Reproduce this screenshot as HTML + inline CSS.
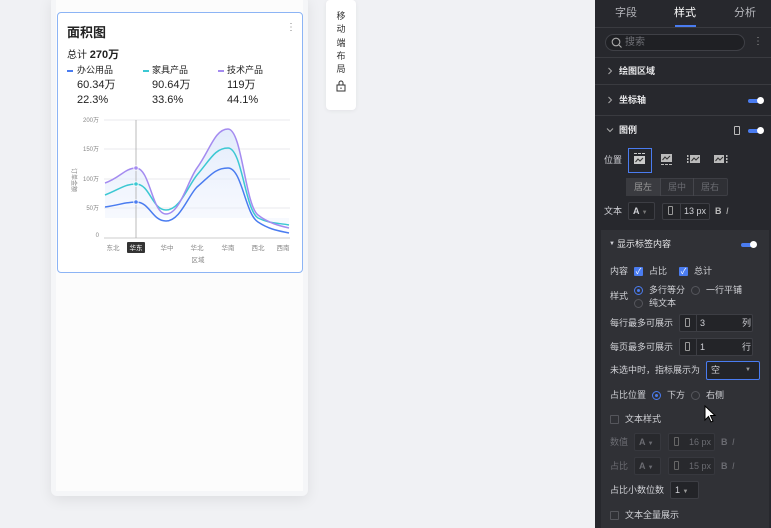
<!DOCTYPE html>
<html><head><meta charset="utf-8">
<style>
*{box-sizing:border-box;margin:0;padding:0}
body{width:771px;height:528px;overflow:hidden;background:#f0f1f4;font-family:"Liberation Sans","Noto Sans CJK SC",sans-serif;position:relative}
.a{position:absolute}
.phone{left:51px;top:-4px;width:257px;height:500px;background:#f5f6f8;border-radius:6px;box-shadow:0 4px 14px rgba(0,0,0,.08)}
.inner{left:56px;top:0;width:247px;height:491px;background:#fcfcfc}
.card{left:57px;top:12px;width:246px;height:261px;border:1px solid #8cb4f5;border-radius:4px;background:#fff}
.t{font-size:12px;color:#222}
.side{left:326px;top:0;width:30px;height:110px;background:#fff;border-radius:4px;box-shadow:0 1px 4px rgba(0,0,0,.06);font-size:9px;color:#333;text-align:center;line-height:13.3px;padding-top:10px}
.panel{left:595px;top:0;width:176px;height:528px;background:#27282d;color:#d0d1d6;font-size:9px}
.panel .a{font-size:9px;line-height:11px}
.sep{left:0;width:176px;height:1px;background:#3a3b40}
.tog{width:14px;height:4px;background:#4a7cf0;border-radius:2px}
.tog:after{content:"";position:absolute;right:-2px;top:-2px;width:7px;height:7px;border-radius:50%;background:#fff}
.box{border:1px solid #3d3e44;background:#232428;border-radius:2px}
.cb{width:9px;height:9px;background:#4a7cf0;border-radius:1px;color:#fff;font-size:8px!important;line-height:9px!important;text-align:center}
.cbe{width:9px;height:9px;border:1px solid #55565c;border-radius:1px}
.rd{width:9px;height:9px;border-radius:50%;border:1px solid #55565c}
.rdo{width:9px;height:9px;border-radius:50%;border:1px solid #4a7cf0}
.rdo:after{content:"";position:absolute;left:2px;top:2px;width:3px;height:3px;border-radius:50%;background:#4a7cf0}
.dim{color:#6b6c72}
</style></head><body>
<div class="a phone"></div>
<div class="a inner"></div>
<div class="a card"></div>
<div class="a" style="left:67px;top:22px;font-size:13px;font-weight:bold;color:#222">面积图</div>
<div class="a" style="left:286px;top:22px;font-size:10px;color:#888">⋮</div>
<div class="a t" style="left:67px;top:46px;font-size:10px">总计 <b style="font-size:11px">270万</b></div>
<div class="a" style="left:67px;top:70px;width:6px;height:2px;background:#4a7cf0"></div>
<div class="a" style="left:143px;top:70px;width:6px;height:2px;background:#3cc8d3"></div>
<div class="a" style="left:218px;top:70px;width:6px;height:2px;background:#a48bf0"></div>
<div class="a t" style="left:77px;top:65px;font-size:9px;line-height:11px">办公用品</div>
<div class="a t" style="left:152px;top:65px;font-size:9px;line-height:11px">家具产品</div>
<div class="a t" style="left:227px;top:65px;font-size:9px;line-height:11px">技术产品</div>
<div class="a t" style="left:77px;top:78px;font-size:11px;line-height:15px">60.34万<br>22.3%</div>
<div class="a t" style="left:152px;top:78px;font-size:11px;line-height:15px">90.64万<br>33.6%</div>
<div class="a t" style="left:227px;top:78px;font-size:11px;line-height:15px">119万<br>44.1%</div>
<svg class="a" style="left:57px;top:110px" width="246" height="160" viewBox="57 110 246 160">
<defs><linearGradient id="g" x1="0" y1="0" x2="0" y2="1"><stop offset="0" stop-color="#dbe6fb" stop-opacity=".8"/><stop offset="1" stop-color="#eef3fd" stop-opacity=".4"/></linearGradient></defs>
<g stroke="#e8e9ec" stroke-width="1"><line x1="104" y1="120" x2="290" y2="120"/><line x1="104" y1="149" x2="290" y2="149"/><line x1="104" y1="179" x2="290" y2="179"/><line x1="104" y1="208" x2="290" y2="208"/><line x1="104" y1="238" x2="290" y2="238" stroke="#ccc"/></g>
<g font-size="6" fill="#888" text-anchor="end"><text x="99" y="122">200万</text><text x="99" y="151">150万</text><text x="99" y="181">100万</text><text x="99" y="210">50万</text><text x="99" y="237">0</text></g>
<text x="72" y="180" font-size="6" fill="#888" transform="rotate(90 72 180)" text-anchor="middle">订单金额</text>
<path d="M105,183 C120,178 125,166 136,168 C150,170 152,214 166,214 C180,214 188,180 197,168 C210,150 215,129 228,129 C242,129 245,205 258,215 C268,223 280,226 289,228 L289,218 L105,218Z" fill="url(#g)"/>
<line x1="136" y1="120" x2="136" y2="238" stroke="#aaa" stroke-width=".8"/>
<path d="M105,207 C120,205 125,202 136,202 C150,202 152,221 166,221 C180,221 188,196 197,187 C210,176 215,168 228,168 C242,168 245,214 258,222 C270,230 280,231 289,233" fill="none" stroke="#4a7cf0" stroke-width="1.5"/>
<path d="M105,195 C120,189 125,184 136,184 C150,184 152,210 166,210 C180,210 188,186 197,175 C210,160 215,148 228,148 C242,148 245,210 258,218 C270,224 280,223 289,225" fill="none" stroke="#3cc8d3" stroke-width="1.5"/>
<path d="M105,183 C120,178 125,168 136,168 C150,168 152,214 166,214 C180,214 188,180 197,168 C210,150 215,129 228,129 C242,129 245,205 258,215 C268,223 280,226 289,228" fill="none" stroke="#a48bf0" stroke-width="1.5"/>
<circle cx="136" cy="202" r="2.2" fill="#4a7cf0" stroke="#fff" stroke-width=".8"/><circle cx="136" cy="184" r="2.2" fill="#3cc8d3" stroke="#fff" stroke-width=".8"/><circle cx="136" cy="168" r="2.2" fill="#a48bf0" stroke="#fff" stroke-width=".8"/>
<rect x="127" y="242" width="18" height="11" rx="1" fill="#333"/>
<g font-size="6.5" fill="#888" text-anchor="middle"><text x="113" y="250">东北</text><text x="136" y="250" fill="#fff">华东</text><text x="167" y="250">华中</text><text x="197" y="250">华北</text><text x="228" y="250">华南</text><text x="258" y="250">西北</text><text x="283" y="250">西南</text><text x="198" y="262">区域</text></g>
</svg>
<div class="a side">移<br>动<br>端<br>布<br>局<br><svg width="10" height="12" viewBox="0 0 10 12" style="margin-top:4px"><rect x="1" y="5" width="8" height="6" fill="none" stroke="#333"/><path d="M3 5V3a2 2 0 0 1 4 0v2" fill="none" stroke="#333"/><line x1="5" y1="7.5" x2="5" y2="9" stroke="#333"/></svg></div>

<div class="a panel">
<div class="a" style="left:20px;top:7px;font-size:11px;line-height:13px;color:#b5b6bb">字段</div>
<div class="a" style="left:79px;top:7px;font-size:11px;line-height:13px;color:#fff">样式</div>
<div class="a" style="left:139px;top:7px;font-size:11px;line-height:13px;color:#b5b6bb">分析</div>
<div class="a" style="left:80px;top:25px;width:21px;height:2px;background:#4a7cf0"></div>
<div class="a sep" style="top:27px"></div>
<div class="a" style="left:10px;top:34px;width:140px;height:17px;border:1px solid #3f4046;border-radius:9px;background:#1f2024"></div>
<svg class="a" style="left:16px;top:37px" width="11" height="11"><circle cx="5" cy="5" r="3.8" fill="none" stroke="#aaa" stroke-width="1.1"/><line x1="8" y1="8" x2="10.5" y2="10.5" stroke="#aaa" stroke-width="1.1"/></svg>
<div class="a" style="left:30px;top:37px;font-size:10px;color:#6f7076">搜索</div>
<div class="a" style="left:158px;top:36px;font-size:10px;color:#999">⋮</div>
<div class="a sep" style="top:57px"></div>
<svg class="a" style="left:12px;top:67px" width="6" height="8"><path d="M1.5 1 L4.5 4 L1.5 7" fill="none" stroke="#aaa" stroke-width="1"/></svg>
<div class="a" style="left:24px;top:66px;color:#e6e6e8;font-weight:bold">绘图区域</div>
<div class="a sep" style="top:84px"></div>
<svg class="a" style="left:12px;top:96px" width="6" height="8"><path d="M1.5 1 L4.5 4 L1.5 7" fill="none" stroke="#aaa" stroke-width="1"/></svg>
<div class="a" style="left:24px;top:95px;color:#e6e6e8;font-weight:bold">坐标轴</div>
<div class="a tog" style="left:153px;top:99px"></div>
<div class="a sep" style="top:115px"></div>
<svg class="a" style="left:11px;top:127px" width="8" height="6"><path d="M1 1.5 L4 4.5 L7 1.5" fill="none" stroke="#aaa" stroke-width="1"/></svg>
<div class="a" style="left:24px;top:125px;color:#e6e6e8;font-weight:bold">图例</div>
<div class="a" style="left:139px;top:126px;width:6px;height:9px;border:1px solid #bbb;border-radius:1px"></div>
<div class="a tog" style="left:153px;top:129px"></div>
<div class="a" style="left:9px;top:155px">位置</div>
<div class="a" style="left:33px;top:148px;width:24px;height:25px;border:1px solid #4a7cf0"></div>
<svg class="a" style="left:38px;top:153px" width="14" height="14"><rect x="1" y="0" width="3" height="1" fill="#ccc"/><rect x="5" y="0" width="3" height="1" fill="#ccc"/><rect x="9" y="0" width="3" height="1" fill="#ccc"/><rect x="1" y="3" width="11" height="8" fill="#ccc"/><path d="M2.5 9 L5 6 L7 8 L10 5" fill="none" stroke="#333" stroke-width="1"/></svg>
<svg class="a" style="left:65px;top:153px" width="14" height="14"><rect x="1" y="1" width="11" height="8" fill="#bbb"/><path d="M2.5 7 L5 4 L7 6 L10 3" fill="none" stroke="#333" stroke-width="1"/><rect x="1" y="11" width="3" height="1" fill="#bbb"/><rect x="5" y="11" width="3" height="1" fill="#bbb"/><rect x="9" y="11" width="3" height="1" fill="#bbb"/></svg>
<svg class="a" style="left:92px;top:153px" width="14" height="14"><rect x="0" y="2" width="1.5" height="2" fill="#bbb"/><rect x="0" y="5" width="1.5" height="2" fill="#bbb"/><rect x="0" y="8" width="1.5" height="2" fill="#bbb"/><rect x="3" y="2" width="10" height="8" fill="#bbb"/><path d="M4.5 8 L7 5 L9 7 L12 4" fill="none" stroke="#333" stroke-width="1"/></svg>
<svg class="a" style="left:119px;top:153px" width="14" height="14"><rect x="0" y="2" width="10" height="8" fill="#bbb"/><path d="M1.5 8 L4 5 L6 7 L9 4" fill="none" stroke="#333" stroke-width="1"/><rect x="12" y="2" width="1.5" height="2" fill="#bbb"/><rect x="12" y="5" width="1.5" height="2" fill="#bbb"/><rect x="12" y="8" width="1.5" height="2" fill="#bbb"/></svg>
<div class="a box" style="left:31px;top:178px;width:102px;height:18px;background:#2f3035"></div>
<div class="a" style="left:31px;top:178px;width:34px;height:18px;background:#3a3b40"></div>
<div class="a" style="left:65px;top:178px;width:1px;height:18px;background:#45464c"></div><div class="a" style="left:98px;top:178px;width:1px;height:18px;background:#45464c"></div>
<div class="a dim" style="left:39px;top:182px;color:#999">居左</div><div class="a dim" style="left:73px;top:182px">居中</div><div class="a dim" style="left:106px;top:182px">居右</div>
<div class="a" style="left:9px;top:206px">文本</div>
<div class="a box" style="left:33px;top:202px;width:27px;height:18px"></div><div class="a" style="left:38px;top:206px;font-weight:bold">A <span style="color:#777;font-size:6px">▼</span></div>
<div class="a box" style="left:67px;top:203px;width:48px;height:17px"></div>
<div class="a" style="left:73px;top:206px;width:5px;height:9px;border:1px solid #999;border-radius:1px"></div>
<div class="a" style="left:85px;top:203px;width:1px;height:17px;background:#3d3e44"></div>
<div class="a" style="left:89px;top:206px">13 px</div>
<div class="a" style="left:120px;top:206px;font-weight:bold;color:#bbb">B</div><div class="a" style="left:131px;top:206px;font-style:italic;color:#bbb">I</div>
<div class="a" style="left:6px;top:230px;width:168px;height:298px;background:#303136"></div>
<div class="a" style="left:14px;top:239px;font-size:6px">▼</div><div class="a" style="left:22px;top:239px;color:#e6e6e8">显示标签内容</div>
<div class="a tog" style="left:146px;top:243px"></div>
<div class="a" style="left:15px;top:266px">内容</div>
<div class="a cb" style="left:39px;top:267px">✓</div><div class="a" style="left:54px;top:266px">占比</div>
<div class="a cb" style="left:84px;top:267px">✓</div><div class="a" style="left:99px;top:266px">总计</div>
<div class="a" style="left:15px;top:291px">样式</div>
<div class="a rdo" style="left:39px;top:286px"></div><div class="a" style="left:54px;top:285px">多行等分</div>
<div class="a rd" style="left:96px;top:286px"></div><div class="a" style="left:111px;top:285px">一行平铺</div>
<div class="a rd" style="left:39px;top:299px"></div><div class="a" style="left:54px;top:298px">纯文本</div>
<div class="a" style="left:15px;top:318px">每行最多可展示</div>
<div class="a box" style="left:84px;top:314px;width:74px;height:18px"></div>
<div class="a" style="left:90px;top:318px;width:5px;height:9px;border:1px solid #999;border-radius:1px"></div>
<div class="a" style="left:101px;top:314px;width:1px;height:18px;background:#3d3e44"></div>
<div class="a" style="left:105px;top:318px">3</div><div class="a" style="left:147px;top:318px">列</div>
<div class="a" style="left:15px;top:342px">每页最多可展示</div>
<div class="a box" style="left:84px;top:338px;width:74px;height:18px"></div>
<div class="a" style="left:90px;top:342px;width:5px;height:9px;border:1px solid #999;border-radius:1px"></div>
<div class="a" style="left:101px;top:338px;width:1px;height:18px;background:#3d3e44"></div>
<div class="a" style="left:105px;top:342px">1</div><div class="a" style="left:147px;top:342px">行</div>
<div class="a" style="left:15px;top:365px">未选中时，指标展示为</div>
<div class="a box" style="left:111px;top:361px;width:54px;height:19px;border-color:#4a7cf0"></div>
<div class="a" style="left:116px;top:365px">空</div><div class="a" style="left:150px;top:365px;font-size:6px;color:#999">▼</div>
<div class="a" style="left:15px;top:390px">占比位置</div>
<div class="a rdo" style="left:57px;top:391px"></div><div class="a" style="left:72px;top:390px">下方</div>
<div class="a rd" style="left:96px;top:391px"></div><div class="a" style="left:111px;top:390px">右侧</div>
<svg class="a" style="left:108px;top:405px" width="14" height="20"><path d="M2 1 L2 15 L5.5 11.5 L8 17 L10 16 L7.5 10.5 L12 10.5 Z" fill="#fff" stroke="#000" stroke-width="1"/></svg>
<div class="a cbe" style="left:15px;top:415px"></div><div class="a" style="left:30px;top:414px">文本样式</div>
<div class="a dim" style="left:15px;top:437px">数值</div>
<div class="a box" style="left:39px;top:433px;width:27px;height:18px;opacity:.6"></div><div class="a dim" style="left:44px;top:437px;font-weight:bold">A <span style="font-size:6px">▼</span></div>
<div class="a box" style="left:73px;top:433px;width:47px;height:18px;opacity:.6"></div>
<div class="a" style="left:79px;top:437px;width:5px;height:9px;border:1px solid #666;border-radius:1px"></div>
<div class="a dim" style="left:94px;top:437px">16 px</div><div class="a dim" style="left:126px;top:437px;font-weight:bold">B</div><div class="a dim" style="left:137px;top:437px;font-style:italic">I</div>
<div class="a dim" style="left:15px;top:461px">占比</div>
<div class="a box" style="left:39px;top:457px;width:27px;height:18px;opacity:.6"></div><div class="a dim" style="left:44px;top:461px;font-weight:bold">A <span style="font-size:6px">▼</span></div>
<div class="a box" style="left:73px;top:457px;width:47px;height:18px;opacity:.6"></div>
<div class="a" style="left:79px;top:461px;width:5px;height:9px;border:1px solid #666;border-radius:1px"></div>
<div class="a dim" style="left:94px;top:461px">15 px</div><div class="a dim" style="left:126px;top:461px;font-weight:bold">B</div><div class="a dim" style="left:137px;top:461px;font-style:italic">I</div>
<div class="a" style="left:15px;top:485px">占比小数位数</div>
<div class="a box" style="left:75px;top:481px;width:29px;height:18px"></div><div class="a" style="left:80px;top:485px">1 <span style="font-size:6px;color:#999">▼</span></div>
<div class="a cbe" style="left:15px;top:511px"></div><div class="a" style="left:30px;top:510px">文本全量展示</div>
</div>
</body></html>
